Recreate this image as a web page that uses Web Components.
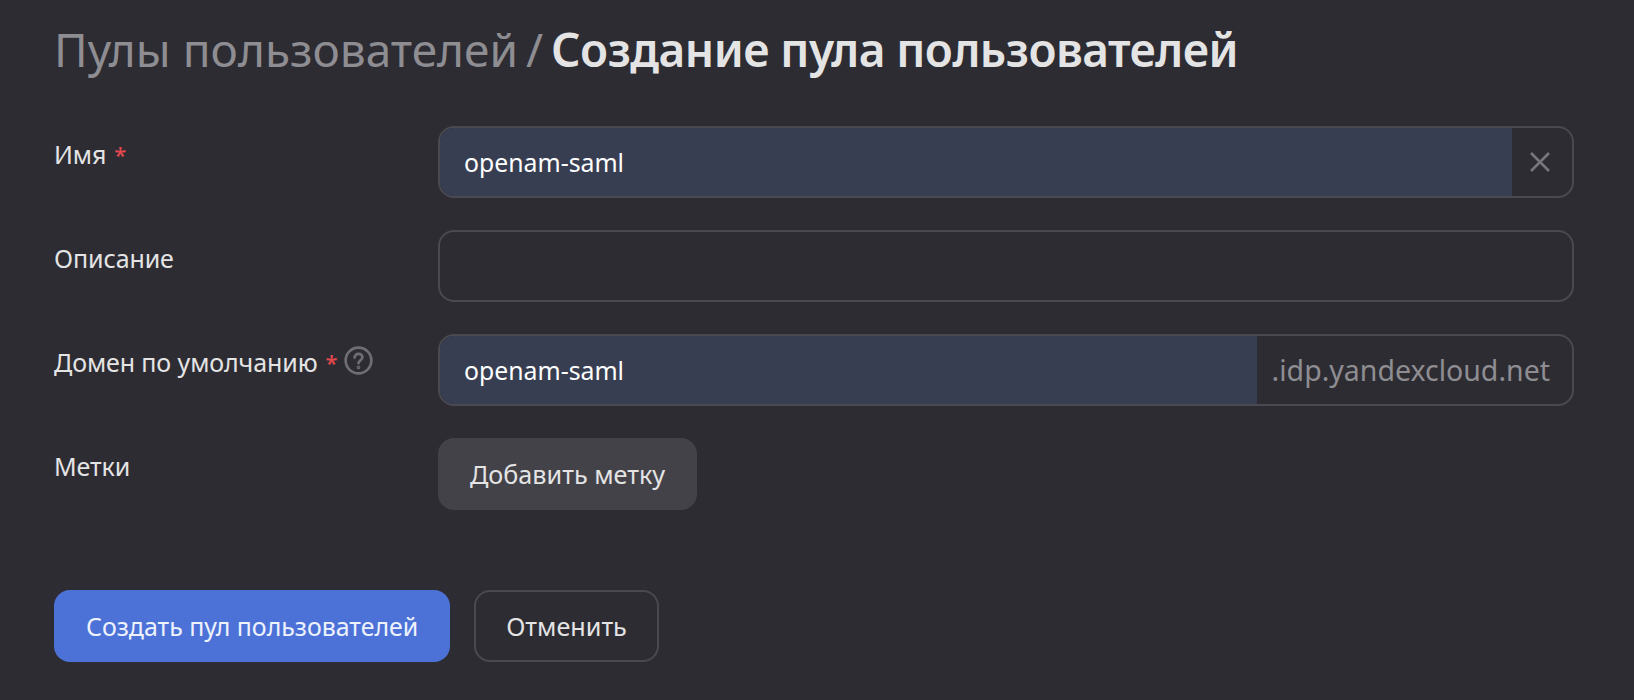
<!DOCTYPE html>
<html lang="ru">
<head>
<meta charset="utf-8">
<title>Создание пула пользователей</title>
<style>
  html, body { margin: 0; height: 100%; background: #2d2c33; }
  body { font-family: "Noto Sans", "Liberation Sans", sans-serif; color: #e6e6e7; }
</style>
</head>
<body>
<pool-form-page>
  <page-title slot="title" parent="Пулы пользователей" current="Создание пула пользователей"></page-title>
  <form-row label="Имя" required>
    <text-field value="openam-saml" clearable></text-field>
  </form-row>
  <form-row label="Описание">
    <text-field></text-field>
  </form-row>
  <form-row label="Домен по умолчанию" required hint>
    <text-field value="openam-saml" suffix=".idp.yandexcloud.net"></text-field>
  </form-row>
  <form-row label="Метки">
    <ui-button kind="soft">Добавить метку</ui-button>
  </form-row>
  <ui-button slot="actions" kind="primary">Создать пул пользователей</ui-button>
  <ui-button slot="actions" kind="outline">Отменить</ui-button>
</pool-form-page>

<script>
class PoolFormPage extends HTMLElement {
  constructor() {
    super();
    this.attachShadow({ mode: "open" });
    this.shadowRoot.innerHTML = `
      <style>
        :host { display: block; box-sizing: border-box; height: 700px; overflow: hidden; padding: 10px 60px 0 54px; }
        .rows { display: flex; flex-direction: column; gap: 32px; margin-top: 38px; }
        .actions { display: flex; gap: 24px; margin-top: 80px; }
      </style>
      <slot name="title"></slot>
      <div class="rows"><slot></slot></div>
      <div class="actions"><slot name="actions"></slot></div>
    `;
  }
}

class PageTitle extends HTMLElement {
  constructor() {
    super();
    this.attachShadow({ mode: "open" });
    this.shadowRoot.innerHTML = `
      <style>
        :host { display: block; font-size: 46px; line-height: 78px; height: 78px; white-space: nowrap; }
        .parent { color: #8e8d91; }
        .sep { color: #8e8d91; word-spacing: -4px; }
        .current { color: #e4e4e5; font-weight: 600; letter-spacing: -0.55px; }
      </style>
      <span class="parent">${this.getAttribute("parent")}</span><span class="sep"> / </span><span class="current">${this.getAttribute("current")}</span>
    `;
  }
}

class FormRow extends HTMLElement {
  constructor() {
    super();
    this.attachShadow({ mode: "open" });
    const star = this.hasAttribute("required") ? `<span class="star">*</span>` : "";
    const hint = this.hasAttribute("hint") ? `
      <svg class="hint" width="29" height="29" viewBox="0 0 28 28" fill="none" stroke="#6f6e74" stroke-width="2.6" stroke-linecap="round">
        <circle cx="14" cy="14" r="12.4"/>
        <path d="M10.2 11.2c0-2.2 1.7-3.6 3.8-3.6s3.8 1.4 3.8 3.3c0 2.9-3.8 3-3.8 5.7"/>
        <circle cx="14" cy="20.6" r="0.5" fill="#6f6e74"/>
      </svg>` : "";
    this.shadowRoot.innerHTML = `
      <style>
        :host { display: grid; grid-template-columns: 384px 1fr; }
        .label { display: flex; align-items: flex-start; font-size: 25px; letter-spacing: -0.1px; line-height: 32px; padding-top: 12px; color: #e4e4e5; }
        .star { color: #e5484d; margin-left: 8px; font-weight: 500; font-size: 22px; }
        .hint { margin-left: 6px; margin-top: 0; }
      </style>
      <div class="label"><span>${this.getAttribute("label")}</span>${star}${hint}</div>
      <div><slot></slot></div>
    `;
  }
}

class TextField extends HTMLElement {
  constructor() {
    super();
    this.attachShadow({ mode: "open" });
    const value = this.getAttribute("value");
    const suffix = this.getAttribute("suffix");
    const clear = this.hasAttribute("clearable") ? `
      <div class="clear">
        <svg width="20" height="20" viewBox="0 0 20 20" fill="none" stroke="#77767b" stroke-width="2.6">
          <path d="M1 1l18 18M19 1L1 19"/>
        </svg>
      </div>` : "";
    this.shadowRoot.innerHTML = `
      <style>
        :host { display: block; }
        .box { box-sizing: border-box; height: 72px; display: flex; border: 2px solid #4a494f; border-radius: 16px; overflow: hidden; font-size: 24.8px; }
        .value { flex: 1; display: flex; align-items: center; padding: 0 24px; color: #fff; }
        .value.filled { background: #383e52; }
        .suffix { display: flex; align-items: center; padding: 0 22px 0 15px; color: #8e8d91; font-size: 28.5px; }
        .clear { box-sizing: border-box; width: 60px; padding-right: 4px; display: flex; align-items: center; justify-content: center; }
      </style>
      <div class="box">
        <div class="value ${value ? "filled" : ""}">${value || ""}</div>
        ${suffix ? `<div class="suffix">${suffix}</div>` : ""}
        ${clear}
      </div>
    `;
  }
}

class UiButton extends HTMLElement {
  constructor() {
    super();
    this.attachShadow({ mode: "open" });
    this.shadowRoot.innerHTML = `
      <style>
        :host { display: inline-block; }
        .btn { box-sizing: border-box; height: 72px; display: flex; align-items: center; padding: 0 32px; border-radius: 16px; font-size: 25.2px; white-space: nowrap; color: #e4e4e5; }
        :host([kind="primary"]) .btn { background: #4c72d8; color: #eef2fc; font-size: 24.9px; }
        :host([kind="soft"]) .btn { background: #434248; }
        :host([kind="outline"]) .btn { border: 2px solid #4a494f; padding: 0 30px; }
      </style>
      <div class="btn"><slot></slot></div>
    `;
  }
}

customElements.define("pool-form-page", PoolFormPage);
customElements.define("page-title", PageTitle);
customElements.define("form-row", FormRow);
customElements.define("text-field", TextField);
customElements.define("ui-button", UiButton);
</script>
</body>
</html>
